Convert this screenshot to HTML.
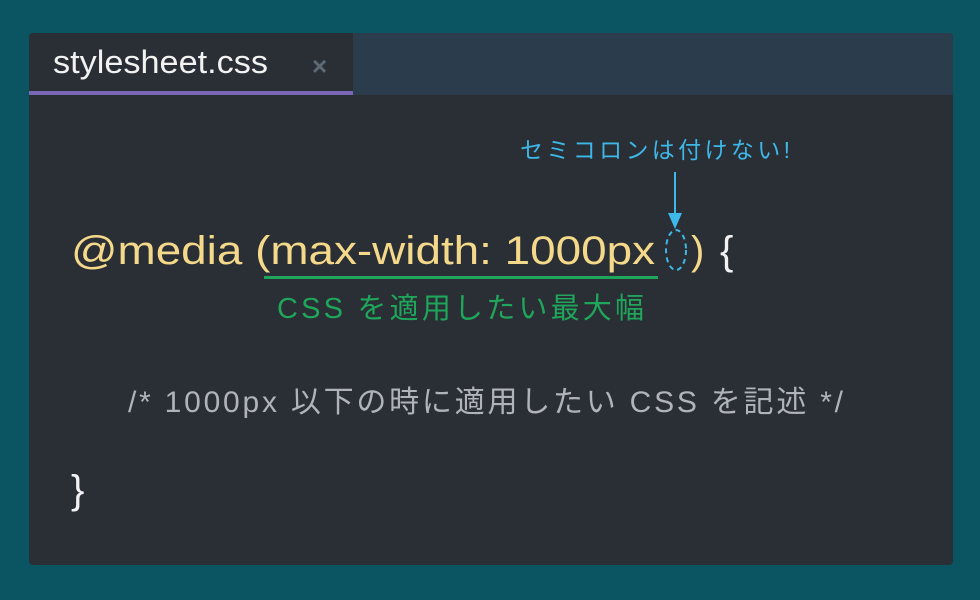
<!DOCTYPE html>
<html><head><meta charset="utf-8"><style>
html,body{margin:0;padding:0;background:#0b5563;width:980px;height:600px;overflow:hidden}
</style></head><body>
<svg width="980" height="600" xmlns="http://www.w3.org/2000/svg" style="display:block">
<rect width="980" height="600" fill="#0b5563"/>
<rect x="29" y="33" width="924" height="532" rx="4" fill="#2a2e35"/>
<path d="M353 33 H949 a4 4 0 0 1 4 4 V95 H353 Z" fill="#2b3d4d"/>
<path d="M33 33 H349 a4 4 0 0 1 4 4 V95 H29 V37 a4 4 0 0 1 4 -4Z" fill="#2a2e35"/>
<rect x="29" y="91" width="324" height="4" fill="#7a67b8"/>
<g font-family="'Liberation Sans','Noto Sans CJK JP',sans-serif">
<text x="53" y="73" font-size="32" fill="#f2f2f2" textLength="215" lengthAdjust="spacingAndGlyphs">stylesheet.css</text>
<text x="312" y="75" font-size="26" font-weight="bold" fill="#5d6a76">×</text>
<text x="520" y="158" font-size="23" fill="#3db8e8" textLength="270">セミコロンは付けない!</text>
<line x1="675" y1="172" x2="675" y2="215" stroke="#3db8e8" stroke-width="2"/>
<path d="M668 213 L682 213 L675 229 Z" fill="#3db8e8"/>
<text x="71" y="264" font-size="40" fill="#f5d98a" textLength="584" lengthAdjust="spacingAndGlyphs">@media (max-width: 1000px</text>
<ellipse cx="676" cy="250" rx="10" ry="20" fill="none" stroke="#3db8e8" stroke-width="2" stroke-dasharray="5 4"/>
<text x="691" y="264" font-size="40" fill="#f5d98a">)</text>
<text x="720" y="264" font-size="40" fill="#f2f2f2">{</text>
<rect x="264" y="276" width="394" height="3" fill="#1fa65a"/>
<text x="277" y="318" font-size="29" fill="#1fa65a" textLength="367">CSS を適用したい最大幅</text>
<text x="128" y="412" font-size="30" fill="#b0b4b8" textLength="715">/* 1000px 以下の時に適用したい CSS を記述 */</text>
<text x="71" y="503" font-size="40" fill="#f2f2f2">}</text>
</g>
</svg>
</body></html>
